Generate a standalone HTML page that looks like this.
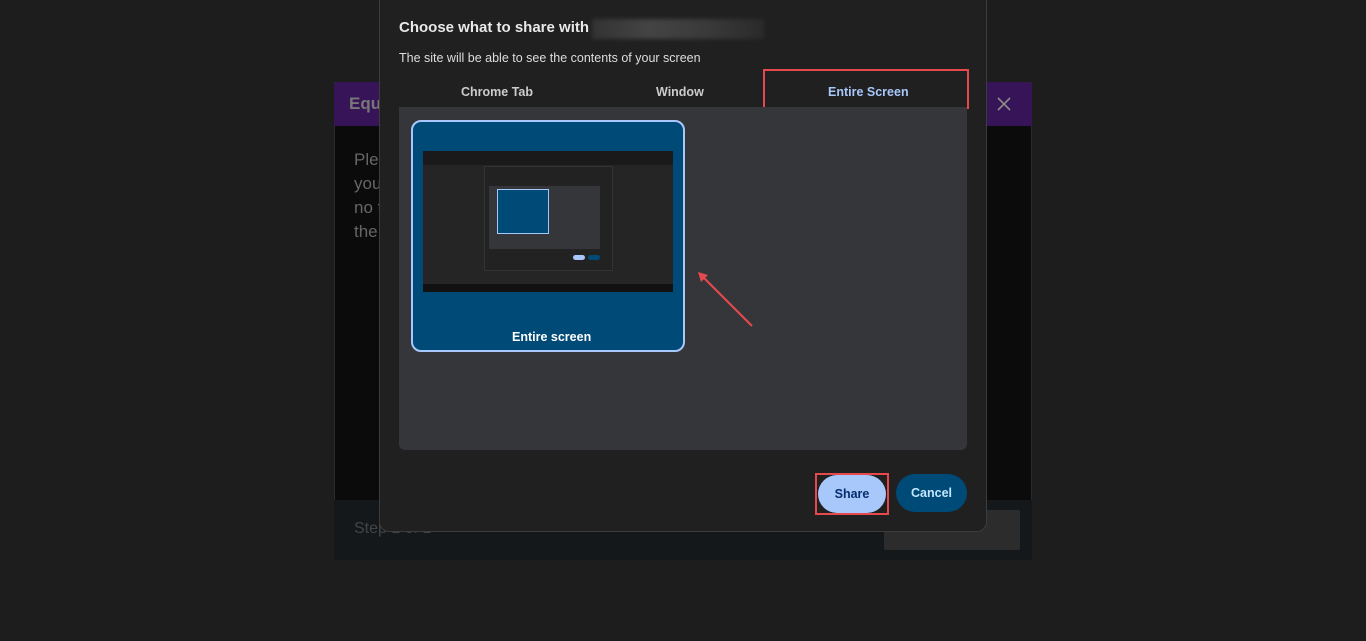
<!DOCTYPE html>
<html><head><style>
body{margin:0;width:1366px;height:641px;background:#1d1d1d;font-family:"Liberation Sans",sans-serif;position:relative;overflow:hidden}
.a{position:absolute}
</style></head><body>
<div class="a" style="left:334px;top:82px;width:698px;height:478px;background:#0b0b0b;border:1px solid #2a2a2a;box-sizing:border-box"></div>
<div class="a" style="left:334px;top:82px;width:698px;height:44px;background:#371457;border-radius:3px 3px 0 0"></div>
<div class="a" style="left:349px;top:94px;color:#777;font-size:17px;font-weight:bold">Equ</div>
<svg class="a" style="left:997px;top:97px" width="14" height="14"><path d="M1 1L13 13M13 1L1 13" stroke="#8a8a8a" stroke-width="1.6"/></svg>
<div class="a" style="left:354px;top:148px;color:#666;font-size:17px;line-height:24px">Ple<br>you<br>no t<br>the</div>
<div class="a" style="left:334px;top:500px;width:698px;height:60px;background:#15181b"></div>
<div class="a" style="left:354px;top:520px;color:#444;font-size:16px">Step 1 of 1</div>
<div class="a" style="left:884px;top:510px;width:136px;height:40px;background:#2c2c2c;border-radius:2px"></div>

<div class="a" style="left:379px;top:-10px;width:608px;height:542px;background:#202020;border:1px solid #3c3c3c;border-radius:10px;box-sizing:border-box"></div>
<div class="a" style="left:399px;top:19px;color:#e8e8e8;font-size:15px;font-weight:bold">Choose what to share with</div>
<div class="a" style="left:592px;top:19px;width:172px;height:20px;background:linear-gradient(90deg,#333,#444,#3a3a3a,#2a2a2a);filter:blur(2px)"></div>
<div class="a" style="left:399px;top:51px;color:#ddd;font-size:12.5px">The site will be able to see the contents of your screen</div>
<div class="a" style="left:461px;top:85px;color:#ccc;font-size:12.5px;font-weight:bold">Chrome Tab</div>
<div class="a" style="left:656px;top:85px;color:#ccc;font-size:12.5px;font-weight:bold">Window</div>
<div class="a" style="left:828px;top:85px;color:#a8c7fa;font-size:12.5px;font-weight:bold">Entire Screen</div>
<div class="a" style="left:763px;top:69px;width:206px;height:40px;border:2px solid #e5484d;box-sizing:border-box"></div>
<div class="a" style="left:399px;top:107px;width:568px;height:343px;background:#35363a;border-radius:0 0 6px 6px"></div>
<div class="a" style="left:411px;top:120px;width:274px;height:232px;background:#004a77;border:2px solid #a8c7fa;border-radius:10px;box-sizing:border-box"></div>
<div class="a" style="left:423px;top:151px;width:250px;height:141px;background:#252525"></div>
<div class="a" style="left:423px;top:151px;width:250px;height:14px;background:#1a1a1a"></div>
<div class="a" style="left:484px;top:166px;width:127px;height:103px;background:#222;border:1px solid #333"></div>
<div class="a" style="left:489px;top:186px;width:111px;height:63px;background:#35363a"></div>
<div class="a" style="left:497px;top:189px;width:50px;height:43px;background:#004a77;border:1px solid #a8c7fa"></div>
<div class="a" style="left:573px;top:255px;width:12px;height:5px;background:#a8c7fa;border-radius:3px"></div>
<div class="a" style="left:588px;top:255px;width:12px;height:5px;background:#004a77;border-radius:3px"></div>
<div class="a" style="left:423px;top:284px;width:250px;height:8px;background:#111"></div>
<div class="a" style="left:512px;top:330px;color:#fff;font-size:12.5px;font-weight:bold">Entire screen</div>
<svg class="a" style="left:694px;top:268px" width="62" height="62"><line x1="58" y1="58" x2="6" y2="6" stroke="#e5484d" stroke-width="2"/><path d="M4 4 L14 7 L7 14Z" fill="#e5484d"/></svg>
<div class="a" style="left:818px;top:475px;width:68px;height:38px;background:#a8c7fa;border-radius:19px;color:#062e6f;font-size:12.5px;font-weight:bold;text-align:center;line-height:38px">Share</div>
<div class="a" style="left:815px;top:473px;width:74px;height:42px;border:2px solid #e5484d;box-sizing:border-box"></div>
<div class="a" style="left:896px;top:474px;width:71px;height:38px;background:#004a77;border-radius:19px;color:#c2e7ff;font-size:12.5px;font-weight:bold;text-align:center;line-height:38px">Cancel</div>
</body></html>
